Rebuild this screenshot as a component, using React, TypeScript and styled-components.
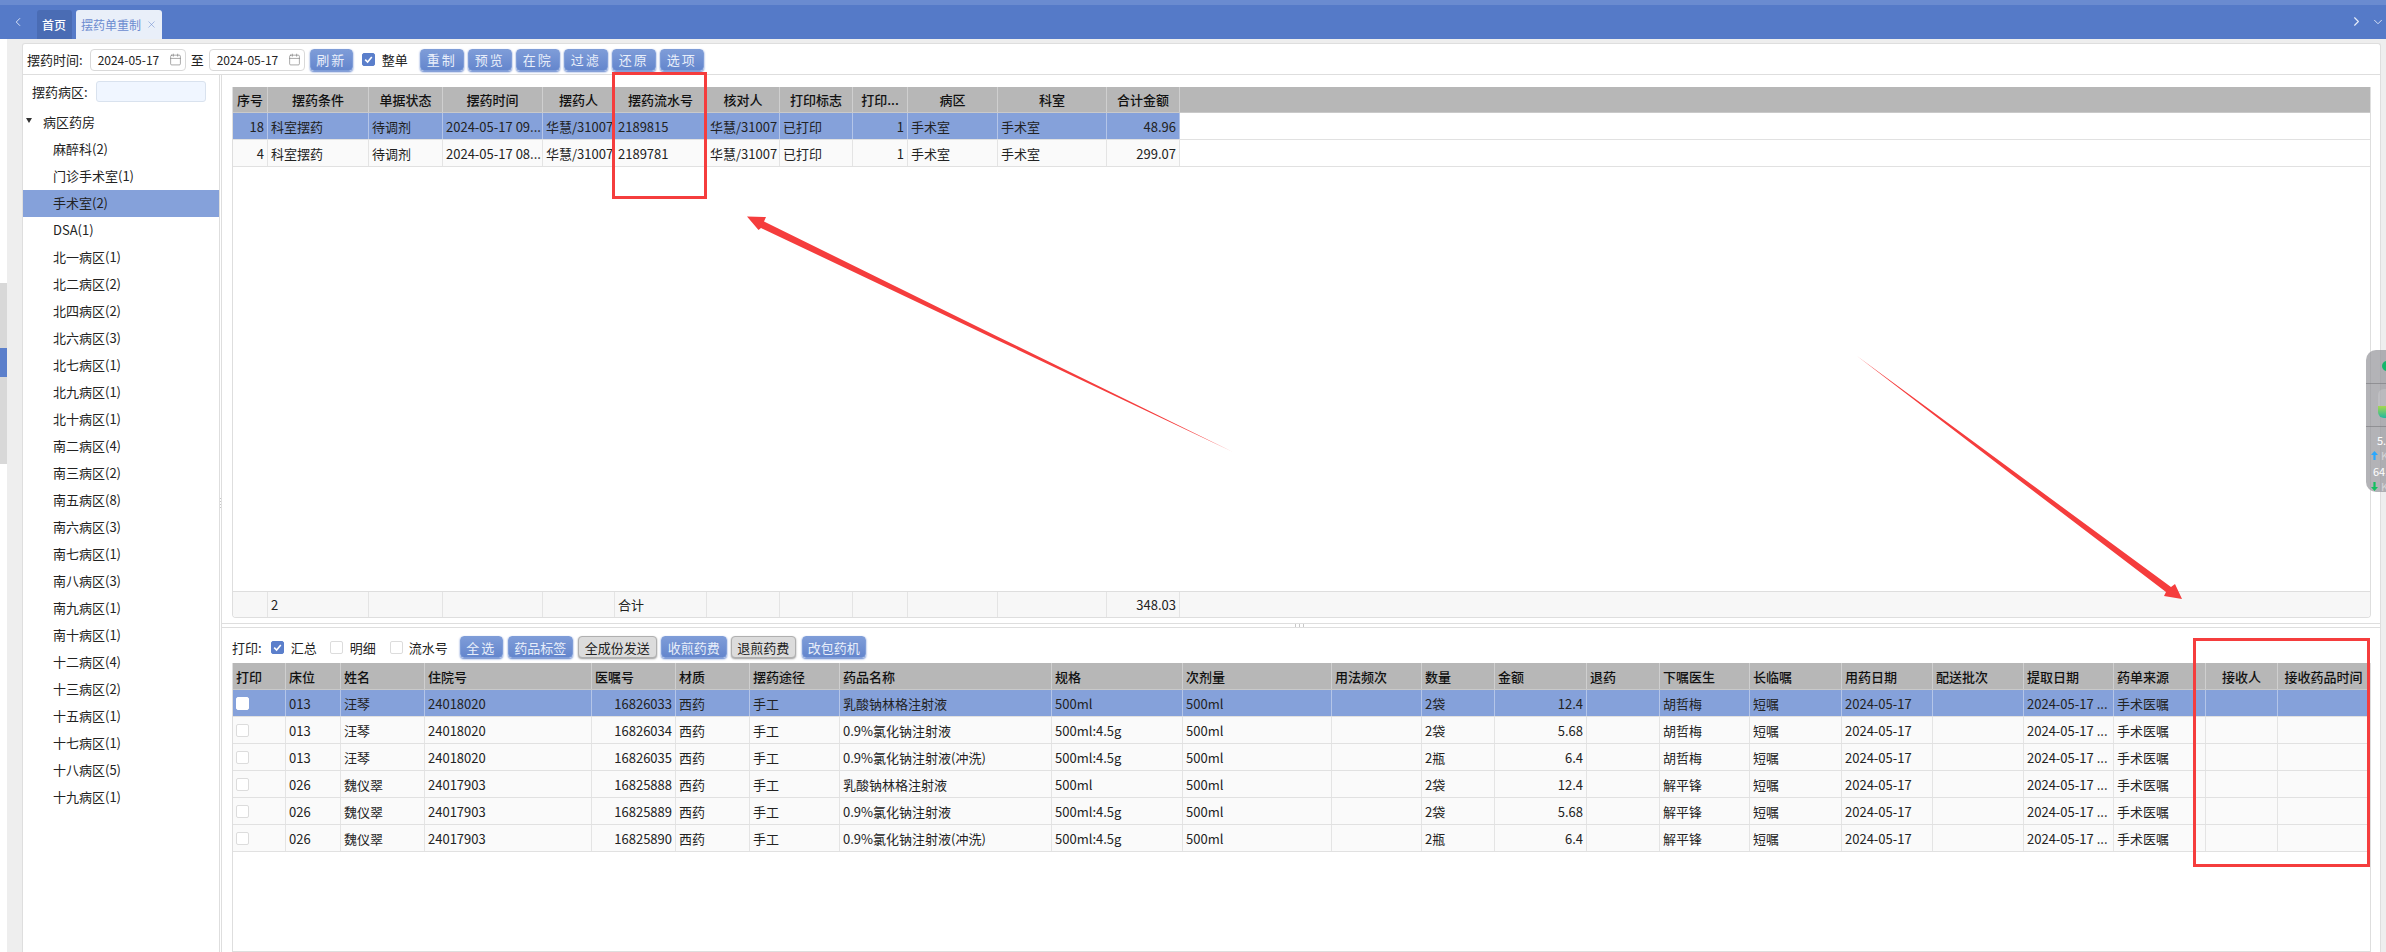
import React from 'react'
import styled, { createGlobalStyle } from 'styled-components'
import { Calendar, ChevronDown, ChevronLeft, ChevronRight, X } from 'lucide-react'

const GlobalStyle = createGlobalStyle`
  html, body {
    margin: 0;
    padding: 0;
    background: #fff;
    font-family: "Noto Sans CJK SC", "Noto Sans", sans-serif;
    font-size: 13px;
    color: #222;
  }
  * { box-sizing: border-box; }
`

const Page = styled.div`
  position: relative;
  width: 2386px;
  height: 952px;
  overflow: hidden;
  display: flex;
  flex-direction: column;
`

/* ---------- top tab bar ---------- */
const TopBar = styled.div`
  flex: none;
  height: 39px;
  padding-right: 1px;
  background: linear-gradient(#6a8bd0 0 5px, #557ac8 5px);
  display: flex;
  align-items: flex-end;
  color: #e8eefa;
`
const NavIcon = styled.div<{ $ml?: number }>`
  display: flex;
  align-items: center;
  height: 29px;
  padding-bottom: 6px;
  margin-left: ${({ $ml }) => $ml ?? 0}px;
`
const TabStrip = styled.div`
  flex: 1;
  display: flex;
  gap: 4px;
  margin-left: 12px;
`
const Tab = styled.div<{ $active?: boolean }>`
  height: 29px;
  width: ${({ $active }) => ($active ? 86 : 35)}px;
  padding: 0 5px;
  display: flex;
  align-items: center;
  justify-content: space-between;
  white-space: nowrap;
  border-radius: 3px 3px 0 0;
  font-size: 12px;
  background: ${({ $active }) => ($active ? '#e9eff9' : '#4a6cb4')};
  color: ${({ $active }) => ($active ? '#6c8cd0' : '#fff')};
  font-weight: ${({ $active }) => ($active ? 400 : 500)};
`

/* ---------- page body ---------- */
const Body = styled.div`
  flex: 1;
  min-height: 0;
  display: flex;
`
const EdgeStrip = styled.div`
  flex: none;
  width: 7px;
  padding-top: 244px;
  background: #fff;
  display: flex;
  flex-direction: column;
`
const EdgeBlock = styled.div<{ $h: number; $blue?: boolean }>`
  height: ${({ $h }) => $h}px;
  background: ${({ $blue }) => ($blue ? '#5b7fcb' : '#d8d8d8')};
`
const Workspace = styled.div`
  flex: 1;
  min-width: 0;
  background: #eeeeee;
  padding: 4px 5px 0 15px;
  display: flex;
`
const Panel = styled.div`
  flex: 1;
  min-width: 0;
  background: #fff;
  border: 1px solid #dedede;
  border-bottom: none;
  border-radius: 3px 3px 0 0;
  display: flex;
  flex-direction: column;
`
const Toolbar = styled.div`
  flex: none;
  height: 31px;
  border-bottom: 1px solid #dedede;
  display: flex;
  align-items: center;
  padding: 1px 0 0 4px;
`
const Label = styled.span<{ $ml?: number; $mr?: number }>`
  margin-left: ${({ $ml }) => $ml ?? 0}px;
  margin-right: ${({ $mr }) => $mr ?? 0}px;
  white-space: nowrap;
`
const DateInput = styled.div`
  width: 96px;
  height: 22px;
  margin-left: 7px;
  padding: 0 3px 0 7px;
  border: 1px solid #d9d9d9;
  border-radius: 4px;
  background: #fff;
  display: flex;
  align-items: center;
  justify-content: space-between;
  font-size: 12px;
  color: #7c7c7c;

  span {
    color: #222;
  }
`
const ActionButton = styled.button<{ $w: number; $ml?: number; $gray?: boolean; $spaced?: boolean }>`
  flex: none;
  width: ${({ $w }) => $w}px;
  height: 22px;
  margin-left: ${({ $ml }) => $ml ?? 0}px;
  padding: 0;
  border-radius: 4px;
  font: inherit;
  font-size: 13px;
  letter-spacing: ${({ $spaced }) => ($spaced ? '2px' : '0')};
  border: 1px solid ${({ $gray }) => ($gray ? '#b0b0b0' : '#7f9dd8')};
  background: ${({ $gray }) => ($gray ? '#dcdcdc' : 'linear-gradient(#7e9cd8, #6486cd)')};
  color: ${({ $gray }) => ($gray ? '#222' : '#e8eefa')};
  box-shadow: 0 1px 2px ${({ $gray }) => ($gray ? '#9a9a9a' : '#5b7fcb')};
`
const CheckBox = styled.span<{ $checked?: boolean; $white?: boolean; $ml?: number; $mr?: number }>`
  flex: none;
  display: inline-flex;
  align-items: center;
  justify-content: center;
  width: 13px;
  height: 13px;
  margin-left: ${({ $ml }) => $ml ?? 0}px;
  margin-right: ${({ $mr }) => $mr ?? 0}px;
  border-radius: 2px;
  border: 1px solid ${({ $checked, $white }) => ($checked ? '#5b7fcb' : $white ? '#fff' : '#dcdcdc')};
  background: ${({ $checked }) => ($checked ? '#5b7fcb' : '#fff')};
`
const Check = ({ checked, white, ml, mr }: { checked?: boolean; white?: boolean; ml?: number; mr?: number }) => (
  <CheckBox $checked={checked} $white={white} $ml={ml} $mr={mr}>
    {checked && (
      <svg width="9" height="9" viewBox="0 0 9 9">
        <path d="M1.2 4.6 3.6 7 7.8 2" fill="none" stroke="#fff" strokeWidth="1.6" />
      </svg>
    )}
  </CheckBox>
)

const Main = styled.div`
  flex: 1;
  min-height: 0;
  display: flex;
`

/* ---------- ward tree ---------- */
const TreePane = styled.div`
  flex: none;
  width: 196px;
  display: flex;
  flex-direction: column;
`
const SearchRow = styled.div`
  flex: none;
  height: 33px;
  padding: 6px 0 0 9px;
  display: flex;
  align-items: flex-start;
  line-height: 21px;
`
const SearchInput = styled.div`
  width: 110px;
  height: 21px;
  margin-left: 8px;
  background: #f0f6ff;
  border: 1px solid #d9e2ee;
  border-radius: 3px;
`
const TreeRoot = styled.div`
  height: 27px;
  display: flex;
  align-items: center;
  padding-left: 3px;
  padding-bottom: 2px;
  margin-top: 1px;
`
const Caret = styled.span`
  width: 0;
  height: 0;
  margin: 0 11px 2px 0;
  border-left: 3.5px solid transparent;
  border-right: 3.5px solid transparent;
  border-top: 5px solid #333;
`
const TreeItem = styled.div<{ $active?: boolean }>`
  height: 27px;
  line-height: 25px;
  padding-left: 30px;
  background: ${({ $active }) => ($active ? '#85a1da' : 'transparent')};
`
const VSplit = styled.div`
  flex: none;
  width: 3px;
  border-left: 1px solid #dedede;
  border-right: 1px solid #dedede;
  display: flex;
  align-items: center;
  justify-content: center;

  &::after {
    content: '';
    width: 1px;
    height: 12px;
    margin-bottom: 19px;
    background: repeating-linear-gradient(#c8c8c8 0 1px, transparent 1px 3px);
  }
`

/* ---------- right side ---------- */
const RightPane = styled.div`
  flex: 1;
  min-width: 0;
  display: flex;
  flex-direction: column;
`
const TopSection = styled.div`
  flex: none;
  padding: 12px 9px 5px 10px;
`
const GridFrame = styled.div<{ $h?: number }>`
  height: ${({ $h }) => ($h ? `${$h}px` : '100%')};
  border: 1px solid #dedede;
  border-top: none;
  border-radius: ${({ $h }) => ($h ? '0 0 4px 4px' : '0')};
  display: flex;
  flex-direction: column;
  overflow: hidden;
`
const Row = styled.div<{ $cols: number[]; $kind: 'head' | 'body' | 'active' | 'foot'; $h?: number }>`
  flex: none;
  height: ${({ $h }) => $h ?? 27}px;
  display: grid;
  grid-template-columns: ${({ $cols }) => $cols.map((c) => `${c}px`).join(' ')} 1fr;
  border-bottom: 1px solid ${({ $kind }) => ($kind === 'head' ? '#c9c9c9' : '#e1e1e1')};
  background: ${({ $kind }) =>
    $kind === 'head' ? '#b7b7b7' : $kind === 'active' ? '#85a1da' : $kind === 'foot' ? '#f7f7f7' : '#fafafa'};
  font-weight: ${({ $kind }) => ($kind === 'head' ? 500 : 400)};
  color: ${({ $kind }) => ($kind === 'head' ? '#111' : '#222')};
  ${({ $kind }) => ($kind === 'foot' ? 'border-top: 1px solid #dedede; border-bottom: none;' : '')}
`
const Cell = styled.div<{ $align?: string; $line?: string }>`
  min-width: 0;
  padding: 0 3px;
  display: flex;
  align-items: center;
  justify-content: ${({ $align }) => $align ?? 'flex-start'};
  white-space: nowrap;
  overflow: hidden;
  border-right: 1px solid ${({ $line }) => $line ?? '#e4e4e4'};
`
const Fill = styled.div<{ $white?: boolean }>`
  min-width: 0;
  ${({ $white }) => ($white ? 'background: #fff;' : '')}
`
const GridSpacer = styled.div`
  flex: 1;
  background: #fff;
`
const HSplit = styled.div`
  flex: none;
  height: 5px;
  border-top: 1px solid #dedede;
  border-bottom: 1px solid #dedede;
  display: flex;
  justify-content: center;

  &::after {
    content: '';
    width: 12px;
    height: 3px;
    background: repeating-linear-gradient(90deg, #c8c8c8 0 1px, transparent 1px 4px);
  }
`
const BottomSection = styled.div`
  flex: 1;
  min-height: 0;
  padding: 8px 9px 0 10px;
  display: flex;
  flex-direction: column;
`
const BottomBar = styled.div`
  flex: none;
  height: 22px;
  margin-bottom: 5px;
  display: flex;
  align-items: center;
`

/* ---------- annotations and floating bits ---------- */
const Marker = styled.div<{ $l: number; $t: number; $w: number; $h: number }>`
  position: absolute;
  left: ${({ $l }) => $l}px;
  top: ${({ $t }) => $t}px;
  width: ${({ $w }) => $w}px;
  height: ${({ $h }) => $h}px;
  border: 3px solid #f53d3d;
  pointer-events: none;
`
const ArrowLayer = styled.svg`
  position: absolute;
  left: 0;
  top: 0;
  width: 2386px;
  height: 952px;
  pointer-events: none;
`
const Monitor = styled.div`
  position: absolute;
  left: 2366px;
  top: 350px;
  width: 40px;
  height: 142px;
  padding-left: 5px;
  border-radius: 10px;
  background: rgba(150, 150, 155, 0.72);
  color: #fff;
  font-size: 11px;
  line-height: 12px;
  display: flex;
  flex-direction: column;
`
const MonitorDot = styled.div`
  flex: none;
  width: 10px;
  height: 10px;
  margin: 11px 0 12px 11px;
  border-radius: 50%;
  background: #12b76a;
`
const MonitorGauge = styled.div`
  flex: none;
  width: 30px;
  height: 44px;
  margin-left: -5px;
  padding: 5px 0 8px 12px;
  border-top: 1px solid rgba(120, 120, 125, 0.6);
  border-bottom: 1px solid rgba(120, 120, 125, 0.6);

  &::before {
    content: '';
    display: block;
    width: 20px;
    height: 100%;
    border-radius: 6px;
    background: linear-gradient(rgba(255, 255, 255, 0.15) 0 58%, #a8d84e 58%, #22b8a0);
  }
`
const MonitorValue = styled.div<{ $indent: number; $mt: number }>`
  margin: ${({ $mt }) => $mt}px 0 0 ${({ $indent }) => $indent}px;
  white-space: nowrap;
`
const MonitorRate = styled.div`
  display: flex;
  align-items: center;
  gap: 3px;
  margin-top: 3px;
  color: #d5d5d8;
`

const wards = [
  '麻醉科(2)', '门诊手术室(1)', '手术室(2)', 'DSA(1)', '北一病区(1)', '北二病区(2)', '北四病区(2)', '北六病区(3)',
  '北七病区(1)', '北九病区(1)', '北十病区(1)', '南二病区(4)', '南三病区(2)', '南五病区(8)', '南六病区(3)', '南七病区(1)',
  '南八病区(3)', '南九病区(1)', '南十病区(1)', '十二病区(4)', '十三病区(2)', '十五病区(1)', '十七病区(1)', '十八病区(5)',
  '十九病区(1)',
]

const R = 'flex-end'
const C = 'center'

const topCols = [35, 101, 74, 100, 72, 92, 73, 73, 55, 90, 109, 73]
const topHead = ['序号', '摆药条件', '单据状态', '摆药时间', '摆药人', '摆药流水号', '核对人', '打印标志', '打印...', '病区', '科室', '合计金额']
const topAlign = [R, undefined, undefined, undefined, undefined, undefined, undefined, undefined, R, undefined, undefined, R]
const topRows = [
  ['18', '科室摆药', '待调剂', '2024-05-17 09...', '华慧/31007', '2189815', '华慧/31007', '已打印', '1', '手术室', '手术室', '48.96'],
  ['4', '科室摆药', '待调剂', '2024-05-17 08...', '华慧/31007', '2189781', '华慧/31007', '已打印', '1', '手术室', '手术室', '299.07'],
]
const topFoot = ['', '2', '', '', '', '合计', '', '', '', '', '', '348.03']

const botCols = [53, 55, 84, 167, 84, 74, 90, 212, 131, 149, 90, 73, 92, 73, 90, 92, 91, 91, 90, 92, 72, 92]
const botHead = ['打印', '床位', '姓名', '住院号', '医嘱号', '材质', '摆药途径', '药品名称', '规格', '次剂量', '用法频次', '数量', '金额', '退药', '下嘱医生', '长临嘱', '用药日期', '配送批次', '提取日期', '药单来源', '接收人', '接收药品时间']

const drug = (bed: string, name: string, zy: string, yz: string, drugName: string, spec: string, qty: string, amount: string, doctor: string) => [
  '', bed, name, zy, yz, '西药', '手工', drugName, spec, '500ml', '', qty, amount, '', doctor, '短嘱', '2024-05-17', '', '2024-05-17 ...', '手术医嘱', '', '',
]
const botRows = [
  drug('013', '汪琴', '24018020', '16826033', '乳酸钠林格注射液', '500ml', '2袋', '12.4', '胡哲梅'),
  drug('013', '汪琴', '24018020', '16826034', '0.9%氯化钠注射液', '500ml:4.5g', '2袋', '5.68', '胡哲梅'),
  drug('013', '汪琴', '24018020', '16826035', '0.9%氯化钠注射液(冲洗)', '500ml:4.5g', '2瓶', '6.4', '胡哲梅'),
  drug('026', '魏仪翠', '24017903', '16825888', '乳酸钠林格注射液', '500ml', '2袋', '12.4', '解平锋'),
  drug('026', '魏仪翠', '24017903', '16825889', '0.9%氯化钠注射液', '500ml:4.5g', '2袋', '5.68', '解平锋'),
  drug('026', '魏仪翠', '24017903', '16825890', '0.9%氯化钠注射液(冲洗)', '500ml:4.5g', '2瓶', '6.4', '解平锋'),
]
const botAlign = (i: number) => (i === 4 || i === 12 ? R : undefined)

const App: React.FC = () => (
  <Page>
    <GlobalStyle />
    <TopBar>
      <NavIcon $ml={11}>
        <ChevronLeft size={14} strokeWidth={1.5} />
      </NavIcon>
      <TabStrip>
        <Tab>首页</Tab>
        <Tab $active>
          摆药单重制
          <X size={11} strokeWidth={1.2} />
        </Tab>
      </TabStrip>
      <NavIcon>
        <ChevronRight size={15} strokeWidth={1.8} />
      </NavIcon>
      <NavIcon $ml={7}>
        <ChevronDown size={14} strokeWidth={1.5} />
      </NavIcon>
    </TopBar>

    <Body>
      <EdgeStrip>
        <EdgeBlock $h={65} />
        <EdgeBlock $h={29} $blue />
        <EdgeBlock $h={87} />
      </EdgeStrip>
      <Workspace>
        <Panel>
          <Toolbar>
            <Label>摆药时间:</Label>
            <DateInput>
              <span>2024-05-17</span>
              <Calendar size={13} strokeWidth={1.2} />
            </DateInput>
            <Label $ml={5} $mr={-2}>至</Label>
            <DateInput>
              <span>2024-05-17</span>
              <Calendar size={13} strokeWidth={1.2} />
            </DateInput>
            <ActionButton $w={43} $ml={5} $spaced>刷新</ActionButton>
            <Check checked ml={9} mr={7} />
            <Label>整单</Label>
            {['重制', '预览', '在院', '过滤', '还原', '选项'].map((t, i) => (
              <ActionButton key={t} $w={44} $ml={i === 0 ? 12 : 4} $spaced>
                {t}
              </ActionButton>
            ))}
          </Toolbar>

          <Main>
            <TreePane>
              <SearchRow>
                <Label>摆药病区:</Label>
                <SearchInput />
              </SearchRow>
              <TreeRoot>
                <Caret />
                病区药房
              </TreeRoot>
              {wards.map((w) => (
                <TreeItem key={w} $active={w === '手术室(2)'}>
                  {w}
                </TreeItem>
              ))}
            </TreePane>
            <VSplit />

            <RightPane>
              <TopSection>
                <GridFrame $h={531}>
                  <Row $cols={topCols} $kind="head" $h={26}>
                    {topHead.map((h) => (
                      <Cell key={h} $align={C} $line="#cfcfcf">
                        {h}
                      </Cell>
                    ))}
                    <Fill />
                  </Row>
                  {topRows.map((r, ri) => (
                    <Row key={r[5]} $cols={topCols} $kind={ri === 0 ? 'active' : 'body'}>
                      {r.map((v, i) => (
                        <Cell key={i} $align={topAlign[i]} $line={ri === 0 ? '#b4c5e8' : undefined}>
                          {v}
                        </Cell>
                      ))}
                      <Fill $white />
                    </Row>
                  ))}
                  <GridSpacer />
                  <Row $cols={topCols} $kind="foot" $h={26}>
                    {topFoot.map((v, i) => (
                      <Cell key={i} $align={i === 11 ? R : undefined}>
                        {v}
                      </Cell>
                    ))}
                    <Fill />
                  </Row>
                </GridFrame>
              </TopSection>
              <HSplit />

              <BottomSection>
                <BottomBar>
                  <Label>打印:</Label>
                  <Check checked ml={9} mr={7} />
                  <Label>汇总</Label>
                  <Check ml={13} mr={7} />
                  <Label>明细</Label>
                  <Check ml={14} mr={6} />
                  <Label>流水号</Label>
                  <ActionButton $w={43} $ml={12} $spaced>全选</ActionButton>
                  <ActionButton $w={65} $ml={5}>药品标签</ActionButton>
                  <ActionButton $w={79} $ml={5} $gray>全成份发送</ActionButton>
                  <ActionButton $w={66} $ml={4}>收煎药费</ActionButton>
                  <ActionButton $w={65} $ml={4} $gray>退煎药费</ActionButton>
                  <ActionButton $w={64} $ml={6}>改包药机</ActionButton>
                </BottomBar>
                <GridFrame>
                  <Row $cols={botCols} $kind="head">
                    {botHead.map((h, i) => (
                      <Cell key={h} $align={i >= 20 ? C : undefined} $line="#cfcfcf">
                        {h}
                      </Cell>
                    ))}
                  </Row>
                  {botRows.map((r, ri) => (
                    <Row key={r[4]} $cols={botCols} $kind={ri === 0 ? 'active' : 'body'}>
                      {r.map((v, i) => (
                        <Cell key={i} $align={botAlign(i)} $line={ri === 0 ? '#b4c5e8' : undefined}>
                          {i === 0 ? <Check white={ri === 0} /> : v}
                        </Cell>
                      ))}
                    </Row>
                  ))}
                </GridFrame>
              </BottomSection>
            </RightPane>
          </Main>
        </Panel>
      </Workspace>
    </Body>

    <Monitor>
      <MonitorDot />
      <MonitorGauge />
      <MonitorValue $indent={6} $mt={7}>5.5</MonitorValue>
      <MonitorRate>
        <svg width="7" height="9" viewBox="0 0 7 9"><path d="M3.5 0 7 4H4.6v5H2.4V4H0z" fill="#2aa8ff" /></svg>
        K
      </MonitorRate>
      <MonitorValue $indent={2} $mt={4}>64.</MonitorValue>
      <MonitorRate>
        <svg width="7" height="9" viewBox="0 0 7 9"><path d="M3.5 9 0 5h2.4V0h2.2v5H7z" fill="#12c060" /></svg>
        K
      </MonitorRate>
    </Monitor>

    <Marker $l={612} $t={72} $w={95} $h={127} />
    <Marker $l={2193} $t={638} $w={177} $h={229} />
    <ArrowLayer viewBox="0 0 2386 952">
      <polygon fill="#f53d3d" points="747,216.5 766,217 764,221.5 998.4,336.9 1233,452 997,339.9 761,228 758.5,230" />
      <polygon fill="#f53d3d" points="2182,599 2175,584 2171,587 2014,471.6 1857,356 2011.6,474.4 2166,592 2164,596" />
    </ArrowLayer>
  </Page>
)

export default App
